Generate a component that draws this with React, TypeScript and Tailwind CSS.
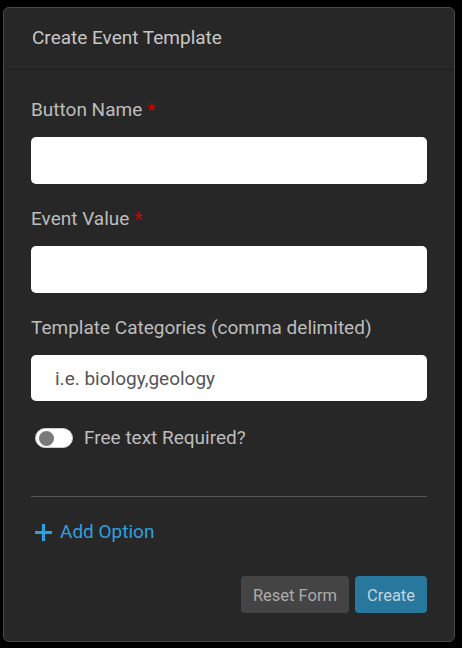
// App.tsx — create event template form

const labelCls = 'text-[19px] leading-[24px] text-[#bdbdbd] mb-[15px]'
const inputCls =
  'w-full bg-white rounded-[5px] px-[24px] text-[19px] text-[#333] outline-none placeholder:text-[#555]'

function Field({ label, required, height, placeholder }: {
  label: string
  required?: boolean
  height: string
  placeholder?: string
}) {
  return (
    <div>
      <div className={labelCls}>
        {label}
        {required && <span className="text-[#d20000] ml-[5px]">*</span>}
      </div>
      <input className={`${inputCls} ${height}`} placeholder={placeholder} />
    </div>
  )
}

export default function App() {
  return (
    <div
      className="min-h-screen bg-black pt-[7px] pl-[3px]"
      style={{ fontFamily: 'Roboto, "Noto Sans", sans-serif' }}
    >
      <div className="w-[452px] h-[635px] bg-[#272727] border border-[#4a4a4a] rounded-[6px] flex flex-col">
        {/* Header */}
        <div className="h-[62px] px-[28px] flex items-center border-b border-[#1e1e1e]">
          <h1 className="text-[19px] text-[#c6c6c6]">Create Event Template</h1>
        </div>

        {/* Body */}
        <div className="px-[27px] pt-[28px] pb-[27px] flex flex-col">
          <Field label="Button Name" required height="h-[47px]" />
          <div className="mt-[23px]">
            <Field label="Event Value" required height="h-[47px]" />
          </div>
          <div className="mt-[23px]">
            <Field
              label="Template Categories (comma delimited)"
              height="h-[46px]"
              placeholder="i.e. biology,geology"
            />
          </div>

          {/* Toggle */}
          <div className="mt-[25px] h-[24px] flex items-center pl-[4px]">
            <div className="w-[38px] h-[20px] bg-white rounded-full flex items-center px-[3px] border border-[#ccc]">
              <div className="w-[15px] h-[15px] rounded-full bg-[#7a7a7a]" />
            </div>
            <span className="ml-[11px] text-[19px] text-[#bdbdbd]">Free text Required?</span>
          </div>

          <hr className="mt-[46px] border-t border-[#555]" />

          {/* Add option */}
          <button className="mt-[23px] h-[24px] flex items-center text-[#2ea0e0] text-[19px] self-start pl-[4px]">
            <svg width="17" height="17" viewBox="0 0 16 16" className="mr-[8px]">
              <path d="M8 0v16M0 8h16" stroke="currentColor" strokeWidth="3" />
            </svg>
            Add Option
          </button>

          {/* Actions */}
          <div className="mt-[32px] flex justify-end gap-[6px]">
            <button className="h-[37px] w-[108px] rounded-[4px] bg-[#444] text-[#acacac] text-[16.5px] pt-[3px]">
              Reset Form
            </button>
            <button className="h-[37px] w-[72px] rounded-[4px] bg-[#28789e] text-[#c4d4dc] text-[16.5px] pt-[3px]">
              Create
            </button>
          </div>
        </div>
      </div>
    </div>
  )
}
